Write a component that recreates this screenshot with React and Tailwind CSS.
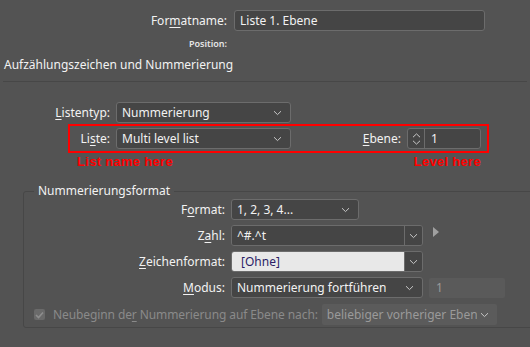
import React from "react";

const Chevron = ({ className = "" }) => (
  <svg width="9" height="6" viewBox="0 0 9 6" className={className}>
    <path d="M1 1.2 L4.5 4.6 L8 1.2" fill="none" stroke="#c8c8c8" strokeWidth="1" />
  </svg>
);

const U = ({ children }) => <span className="underline underline-offset-[2px]">{children}</span>;

const Select = ({ value, className = "" }) => (
  <div
    className={`h-[21px] flex items-center justify-between pl-[5px] pr-[8px] bg-[#454545] border border-[#6c6c6c] rounded-[3px] text-[#f2f2f2] ${className}`}
  >
    <span className="truncate leading-[17px]">{value}</span>
    <Chevron />
  </div>
);

const Combo = ({ value, light }) => (
  <div className="w-[192px] h-[21px] flex border border-[#6c6c6c] rounded-[3px] overflow-hidden">
    <div
      className={`flex-1 flex items-center ${
        light ? "bg-[#e8e8e8] text-[#2b1d66] pl-[9px]" : "bg-[#454545] text-[#f2f2f2] pl-[5px]"
      }`}
    >
      {value}
    </div>
    <div className="w-[18px] flex items-center justify-center bg-[#454545] border-l border-[#6c6c6c]">
      <Chevron />
    </div>
  </div>
);

export default function App() {
  return (
    <div className="w-[530px] h-[347px] overflow-hidden bg-[#535353] text-[#f2f2f2] font-['Noto_Sans',sans-serif] text-[12px] leading-[16px]">
      {/* Formatname */}
      <div className="mt-[10px] flex items-center">
        <div className="w-[227px] text-right">
          For<U>m</U>atname:
        </div>
        <div className="ml-[7px] w-[251px] h-[21px] flex items-center pl-[5px] bg-[#454545] border border-[#6c6c6c] rounded-[3px]">
          Liste 1. Ebene
        </div>
      </div>

      <div className="mt-[7px] h-[12px] flex items-center">
        <div className="w-[227px] text-right text-[9px] leading-[12px] font-semibold text-[#e6e6e6]">Position:</div>
      </div>

      <div className="mt-[7px] h-[16px] flex items-center pl-[4px]">Aufzählungszeichen und Nummerierung</div>

      <div className="mt-[8px] mx-[3px] border-t border-[#474747]" />

      {/* Listentyp */}
      <div className="mt-[20px] flex items-center">
        <div className="w-[110px] text-right">
          <U>L</U>istentyp:
        </div>
        <Select value="Nummerierung" className="ml-[6px] w-[175px]" />
      </div>

      {/* Liste + Ebene */}
      <div className="mt-[1px] ml-[68px] w-[421px] h-[29px] border-2 border-[#ff0000] flex items-center">
        <div className="w-[40px] text-right">
          Li<U>s</U>te:
        </div>
        <Select value="Multi level list" className="ml-[6px] w-[175px]" />
        <div className="ml-auto mr-[6px]">
          <U>E</U>bene:
        </div>
        <div className="mr-[6px] w-[74px] h-[21px] flex border border-[#6c6c6c] rounded-[3px] bg-[#454545]">
          <div className="w-[17px] flex flex-col items-center justify-center gap-[2px] border-r border-[#6c6c6c]">
            <svg width="9" height="5" viewBox="0 0 9 5">
              <path d="M1 4.2 L4.5 0.9 L8 4.2" fill="none" stroke="#c8c8c8" strokeWidth="1" />
            </svg>
            <svg width="9" height="5" viewBox="0 0 9 5">
              <path d="M1 0.8 L4.5 4.1 L8 0.8" fill="none" stroke="#c8c8c8" strokeWidth="1" />
            </svg>
          </div>
          <div className="flex items-center pl-[6px]">1</div>
        </div>
      </div>

      <div className="h-[17px] flex items-center font-['Liberation_Sans',sans-serif] font-bold text-[13px] text-[#ff0000] tracking-[0.3px]">
        <span className="ml-[77px]">List name here</span>
        <span className="ml-auto mr-[49px]">Level here</span>
      </div>

      {/* Nummerierungsformat */}
      <fieldset className="mt-[14px] ml-[23px] w-[520px] h-[144px] border border-[#474747] rounded-[3px] pl-[10px]">
        <legend className="px-[4px] leading-[14px]">Nummerierungsformat</legend>
        <div className="mt-[1px] flex flex-col gap-[5px]">
          <div className="flex items-center">
            <div className="w-[191px] text-right">
              F<U>o</U>rmat:
            </div>
            <Select value="1, 2, 3, 4..." className="ml-[6px] w-[128px]" />
          </div>
          <div className="flex items-center">
            <div className="w-[191px] text-right">
              Z<U>a</U>hl:
            </div>
            <div className="ml-[6px]">
              <Combo value="^#.^t" />
            </div>
            <svg width="6" height="10" viewBox="0 0 6 10" className="ml-[10px] -mt-[8px]">
              <path d="M0 0 L6 5 L0 10 Z" fill="#a0a0a0" />
            </svg>
          </div>
          <div className="flex items-center">
            <div className="w-[191px] text-right">
              <U>Z</U>eichenformat:
            </div>
            <div className="ml-[6px]">
              <Combo value="[Ohne]" light />
            </div>
          </div>
          <div className="flex items-center">
            <div className="w-[191px] text-right">
              <U>M</U>odus:
            </div>
            <Select value="Nummerierung fortführen" className="ml-[6px] w-[192px]" />
            <div className="ml-[6px] w-[76px] h-[20px] flex items-center pl-[7px] bg-[#5a5a5a] rounded-[2px] text-[#9a9a9a]">1</div>
          </div>
          <div className="mt-[1px] flex items-center text-[#8a8a8a]">
            <div className="w-[11px] h-[11px] rounded-[2px] bg-[#6a6a6a] flex items-center justify-center">
              <svg width="9" height="8" viewBox="0 0 9 8">
                <path d="M1 4 L3.5 6.5 L8 1.5" fill="none" stroke="#8e8e8e" strokeWidth="1.6" />
              </svg>
            </div>
            <div className="ml-[8px] tracking-[-0.1px]">
              Neubeginn de<U>r</U> Nummerierung auf Ebene nach:
            </div>
            <div className="ml-[4px] w-[175px] h-[21px] flex items-center justify-between pl-[5px] pr-[8px] bg-[#5b5b5b] rounded-[2px] text-[#9a9a9a]">
              <span className="whitespace-nowrap overflow-hidden w-[150px] leading-[17px]">beliebiger vorheriger Ebene</span>
              <Chevron />
            </div>
          </div>
        </div>
      </fieldset>
    </div>
  );
}
